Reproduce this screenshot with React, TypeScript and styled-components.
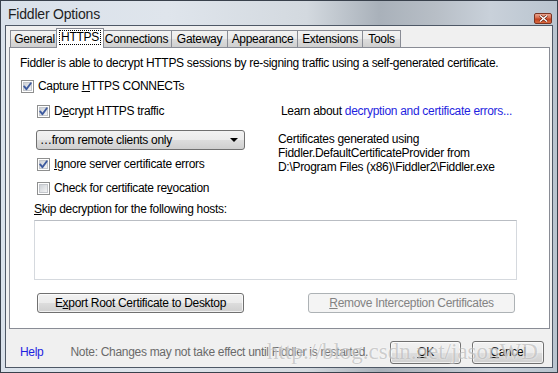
import styled, { createGlobalStyle, css } from "styled-components";

const GlobalStyle = createGlobalStyle`
  html, body {
    margin: 0;
    padding: 0;
    background: #ffffff;
  }
  body {
    font-family: "Liberation Sans", Arial, sans-serif;
    font-size: 12px;
    letter-spacing: -0.3px;
    color: #000;
  }
`;

const tabs = [
  { label: "General", w: 49 },
  { label: "HTTPS", w: 43, active: true },
  { label: "Connections", w: 70 },
  { label: "Gateway", w: 56 },
  { label: "Appearance", w: 70 },
  { label: "Extensions", w: 65 },
  { label: "Tools", w: 38 },
];

function CheckBox({ checked }: { checked?: boolean }) {
  return (
    <svg width="13" height="13" viewBox="0 0 13 13">
      <defs>
        <linearGradient id="cbfill" x1="0" y1="0" x2="1" y2="1">
          <stop offset="0" stopColor="#cbcfd5" />
          <stop offset="1" stopColor="#f6f6f6" />
        </linearGradient>
      </defs>
      <rect x="0.5" y="0.5" width="12" height="12" fill="#fff" stroke="#8e8f8f" />
      <rect x="2.5" y="2.5" width="8" height="8" fill="url(#cbfill)" stroke="#c4c7cc" />
      {checked && (
        <path d="M3.2 6.4 L5.4 9.2 L9.8 3.2" fill="none" stroke="#3d5a9e" strokeWidth="1.9" strokeLinecap="round" strokeLinejoin="round" />
      )}
    </svg>
  );
}

function App() {
  return (
    <>
      <GlobalStyle />
      <Window>
        <TitleBar>
          <Title>Fiddler Options</Title>
          <CloseButton>
            <svg width="9" height="7" viewBox="0 0 9 7">
              <path d="M1 0.5 L8 6.5 M8 0.5 L1 6.5" stroke="#5a1c0c" strokeWidth="2.6" />
              <path d="M1 0.5 L8 6.5 M8 0.5 L1 6.5" stroke="#ffffff" strokeWidth="1.4" />
            </svg>
          </CloseButton>
        </TitleBar>

        <Client>
          <TabStrip>
            {tabs.map((t) => (
              <Tab key={t.label} $w={t.w} $active={t.active}>
                {t.active ? <Focus>{t.label}</Focus> : t.label}
              </Tab>
            ))}
          </TabStrip>

          <Panel>
            <Desc>Fiddler is able to decrypt HTTPS sessions by re-signing traffic using a self-generated certificate.</Desc>
            <CheckRow $top={7}>
              <CheckBox checked />
              <span>Capture <u>H</u>TTPS CONNECTs</span>
            </CheckRow>

            <Columns>
              <LeftCol>
                <CheckRow $top={0}>
                  <CheckBox checked />
                  <span>D<u>e</u>crypt HTTPS traffic</span>
                </CheckRow>
                <Select>
                  <span>…from remote clients only</span>
                  <Arrow />
                </Select>
                <CheckRow $top={6}>
                  <CheckBox checked />
                  <span><u>I</u>gnore server certificate errors</span>
                </CheckRow>
                <CheckRow $top={8}>
                  <CheckBox />
                  <span>Check for certificate re<u>v</u>ocation</span>
                </CheckRow>
              </LeftCol>

              <RightCol>
                <Learn>
                  Learn about <LinkText>decryption and certificate errors...</LinkText>
                </Learn>
                <CertInfo>
                  Certificates generated using
                  <br />
                  Fiddler.DefaultCertificateProvider from
                  <br />
                  D:\Program Files (x86)\Fiddler2\Fiddler.exe
                </CertInfo>
              </RightCol>
            </Columns>

            <SkipLabel>
              <u>S</u>kip decryption for the following hosts:
            </SkipLabel>
            <HostsBox />

            <ButtonRow>
              <PushButton $w={207} $h={20}>
                E<u>x</u>port Root Certificate to Desktop
              </PushButton>
              <PushButton $w={207} $h={20} $disabled>
                <u>R</u>emove Interception Certificates
              </PushButton>
            </ButtonRow>
          </Panel>

          <BottomBar>
            <HelpLink>Help</HelpLink>
            <Note>Note: Changes may not take effect until Fiddler is restarted.</Note>
            <Spacer />
            <PushButton $w={75} $h={23}>
              <u>O</u>K
            </PushButton>
            <PushButton $w={76} $h={23}>
              <u>C</u>ancel
            </PushButton>
          </BottomBar>
        </Client>

        <Watermark>http://blog.csdn.net/jasonWD</Watermark>
      </Window>
    </>
  );
}

const Window = styled.div`
  position: relative;
  width: 558px;
  height: 373px;
  box-sizing: border-box;
  border: 1px solid #39414c;
  background: linear-gradient(
    to right,
    #d9e1ea 0%,
    #dfe5ec 30%,
    #d3d9df 55%,
    #a9b1ba 68%,
    #b7bec6 78%,
    #c9d1da 88%,
    #b9c4cf 100%
  );
  display: flex;
  flex-direction: column;
  overflow: hidden;
`;

const TitleBar = styled.div`
  height: 24px;
  flex: none;
  display: flex;
  justify-content: space-between;
  align-items: flex-start;
  padding: 0 5px 0 7px;
`;

const Title = styled.div`
  padding-top: 5px;
  font-size: 14px;
  letter-spacing: -0.2px;
  line-height: 16px;
  color: #1e1e1e;
`;

const CloseButton = styled.div`
  margin-top: 12px;
  width: 18px;
  height: 11px;
  box-sizing: border-box;
  border: 1px solid #7a3422;
  border-radius: 2px;
  background: linear-gradient(to bottom, #e9a58f 0%, #d7694a 45%, #c2401e 55%, #d86a3f 100%);
  display: flex;
  align-items: center;
  justify-content: center;
`;

const Client = styled.div`
  flex: 1;
  margin: 0 4px 4px 4px;
  border: 1px solid #4e5866;
  background: #f0f0f0;
  display: flex;
  flex-direction: column;
  min-height: 0;
`;

const TabStrip = styled.div`
  height: 21px;
  flex: none;
  display: flex;
  align-items: flex-end;
  padding-left: 4px;
`;

const Tab = styled.div<{ $w: number; $active?: boolean }>`
  width: ${({ $w }) => $w}px;
  box-sizing: border-box;
  height: 17px;
  border: 1px solid #898c95;
  border-bottom: none;
  border-left-width: 0;
  background: linear-gradient(to bottom, #f2f2f2 0%, #ebebeb 50%, #dddddd 51%, #cfcfcf 100%);
  display: flex;
  align-items: center;
  justify-content: center;
  line-height: 14px;
  color: #000;
  white-space: nowrap;

  &:first-child {
    border-left-width: 1px;
  }

  ${({ $active, $w }) =>
    $active &&
    css`
      position: relative;
      z-index: 1;
      width: ${$w + 5}px;
      height: 20px;
      margin: 0 -2px -1px -3px;
      border-left-width: 1px;
      background: #ffffff;
      padding-bottom: 2px;
    `}
`;

const Focus = styled.span`
  outline: 1px dotted #000;
  outline-offset: 0;
  padding: 0 1px;
  line-height: 13px;
`;

const Panel = styled.div`
  height: 282px;
  flex: none;
  box-sizing: border-box;
  margin: 0 2px 0 3px;
  border: 1px solid #898c95;
  background: #ffffff;
  padding: 7px 10px 0 10px;
  display: flex;
  flex-direction: column;
`;

const Desc = styled.div`
  line-height: 16px;
  white-space: nowrap;
`;

const CheckRow = styled.div<{ $top: number }>`
  margin-top: ${({ $top }) => $top}px;
  padding-left: 1px;
  height: 16px;
  display: flex;
  align-items: center;
  gap: 4px;
  white-space: nowrap;

  svg {
    flex: none;
  }
`;

const Columns = styled.div`
  margin-top: 9px;
  margin-left: 16px;
  display: flex;
  gap: 33px;
`;

const LeftCol = styled.div`
  width: 209px;
  display: flex;
  flex-direction: column;
`;

const Select = styled.div`
  margin-top: 11px;
  height: 20px;
  box-sizing: border-box;
  border: 1px solid #707070;
  border-radius: 3px;
  background: linear-gradient(to bottom, #f2f2f2 0%, #ebebeb 50%, #dddddd 51%, #cfcfcf 100%);
  display: flex;
  align-items: center;
  justify-content: space-between;
  padding: 0 6px 0 3px;
  white-space: nowrap;
`;

const Arrow = styled.span`
  width: 0;
  height: 0;
  border-left: 4px solid transparent;
  border-right: 4px solid transparent;
  border-top: 4px solid #000;
`;

const RightCol = styled.div`
  display: flex;
  flex-direction: column;
`;

const Learn = styled.div`
  padding-left: 3px;
  line-height: 16px;
  white-space: nowrap;
`;

const LinkText = styled.span`
  color: #1f1fe0;
`;

const CertInfo = styled.div`
  margin-top: 13px;
  line-height: 14px;
  white-space: nowrap;
`;

const SkipLabel = styled.div`
  margin-top: 5px;
  margin-left: 14px;
  line-height: 16px;
`;

const HostsBox = styled.div`
  margin-top: 3px;
  margin-left: 14px;
  width: 483px;
  height: 60px;
  box-sizing: border-box;
  border: 1px solid #d5d9de;
  border-top-color: #b9bdc3;
  background: #fff;
`;

const ButtonRow = styled.div`
  margin-top: 13px;
  margin-left: 17px;
  display: flex;
  gap: 64px;
`;

const PushButton = styled.div<{ $w: number; $h: number; $disabled?: boolean }>`
  width: ${({ $w }) => $w}px;
  height: ${({ $h }) => $h}px;
  box-sizing: border-box;
  border: 1px solid #707070;
  border-radius: 3px;
  background: linear-gradient(to bottom, #f2f2f2 0%, #ebebeb 50%, #dddddd 51%, #cfcfcf 100%);
  box-shadow: inset 0 0 0 1px rgba(255, 255, 255, 0.7);
  display: flex;
  align-items: center;
  justify-content: center;
  white-space: nowrap;
  color: #000;

  ${({ $disabled }) =>
    $disabled &&
    css`
      border-color: #adb2b5;
      background: #f4f4f4;
      box-shadow: none;
      color: #838383;
    `}
`;

const BottomBar = styled.div`
  flex: 1;
  display: flex;
  align-items: center;
  padding: 8px 8px 0 14px;
  gap: 11px;
`;

const HelpLink = styled.span`
  color: #1f1fe0;
  margin-right: 16px;
`;

const Note = styled.span`
  color: #6a6a6a;
  white-space: nowrap;
`;

const Spacer = styled.div`
  flex: 1;
`;

const Watermark = styled.div`
  position: absolute;
  left: 266px;
  top: 338px;
  font-family: "Liberation Serif", "Times New Roman", serif;
  font-size: 23px;
  letter-spacing: 0;
  line-height: 26px;
  color: rgba(150, 150, 150, 0.45);
  text-shadow: 0 0 2px rgba(255, 255, 255, 0.9);
  white-space: nowrap;
  pointer-events: none;
`;

export default App;
